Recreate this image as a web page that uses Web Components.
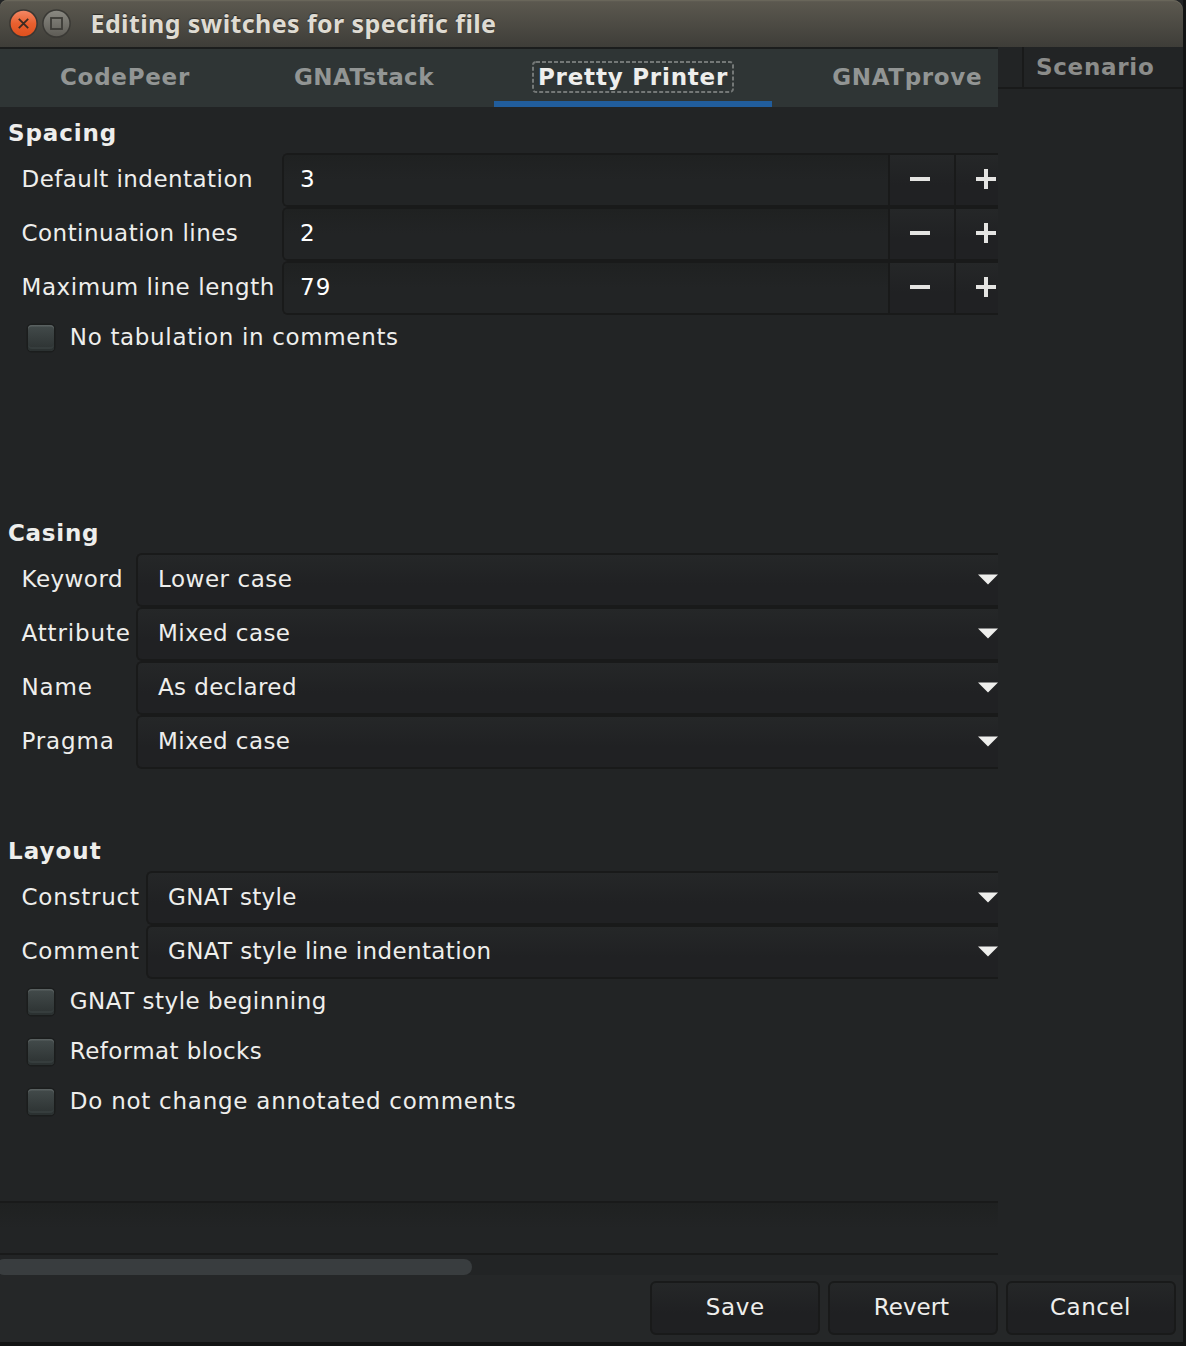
<!DOCTYPE html>
<html lang="en">
<head>
<meta charset="utf-8">
<title>Editing switches for specific file</title>
<style>
html,body{margin:0;background:#131414}
body{width:1186px;height:1346px;overflow:hidden;font:23px/28px "DejaVu Sans",sans-serif;color:#eeeeec}
</style>
</head>
<body>
<switch-dialog></switch-dialog>
<script>
const define = (name, css, html, setup) => customElements.define(name, class extends HTMLElement {
  connectedCallback() {
    if (this.shadowRoot) return;
    this.attachShadow({mode: 'open'}).innerHTML = `<style>*{box-sizing:border-box}${css}</style>${typeof html === 'function' ? html(this) : html}`;
    if (setup) setup(this);
  }
});

/* Text tracked so that its advance equals the w attribute. */
define('track-text', ':host{display:block;white-space:pre;flex:none}span{display:inline-block}', '<span><slot></slot></span>', el => {
  const w = +el.getAttribute('w');
  if (!w) return;
  const span = el.shadowRoot.querySelector('span');
  const n = el.textContent.length;
  span.style.letterSpacing = (w - span.getBoundingClientRect().width) / (n - 1) + 'px';
  el.style.width = w + 'px';
});

define('title-bar', `
:host{display:flex;align-items:center;height:47px;width:1183px;flex:none;border-radius:7px 10px 0 0;padding:0 0 0 9px;
background:linear-gradient(#66635a 0,#5b584f 2px,#3e3d38 100%);box-shadow:inset 0 1px #69665a}
svg{display:block;margin-right:4px}
track-text{font:bold 25px/32px "Noto Sans",sans-serif;color:#dfdbd2;text-shadow:0 -1px 1px #2d2c29;margin:0 0 1px 15.5px}`, `
<svg width="29" height="30" viewBox="0 0 29 30"><defs><linearGradient id="a" x2="0" y2="1"><stop stop-color="#f58a68"/><stop offset=".5" stop-color="#e9602f"/><stop offset="1" stop-color="#de4f1c"/></linearGradient></defs>
<circle cx="14.5" cy="14.5" r="13.6" fill="url(#a)" stroke="#3a3733" stroke-width="1.5"/><path d="M9.8 9.8l9.4 9.4m0-9.4l-9.4 9.4" stroke="#3c2a22" stroke-width="1.8"/></svg>
<svg width="29" height="30" viewBox="0 0 29 30"><defs><linearGradient id="b" x2="0" y2="1"><stop stop-color="#8b8a83"/><stop offset="1" stop-color="#5d5b55"/></linearGradient></defs>
<circle cx="14.5" cy="14.5" r="13.6" fill="url(#b)" stroke="#3a3935" stroke-width="1.5"/><rect x="9" y="9" width="11" height="11" fill="none" stroke="#3c3b37" stroke-width="1.8"/></svg>
<track-text w="405.5">Editing switches for specific file</track-text>`);

define('tab-item', `
:host{display:flex;flex:none;height:58px;justify-content:flex-start;font-weight:bold;color:#929594}
:host([active]){color:#eeeeec;box-shadow:inset 0 -6px #215d9c}
div{position:relative;margin-top:12px;height:32px;padding:2px 4px 0 4.7px}
svg{position:absolute;left:-1px;top:0}`, el => `
<div>${el.hasAttribute('active') ? '<svg width="202" height="32"><rect x="1" y="1" width="200" height="30" rx="3" fill="none" stroke="#747877" stroke-width="2" stroke-dasharray="4 2"/></svg>' : ''}<slot></slot></div>`);

define('tab-strip', ':host{display:flex;height:60px;flex:none;overflow:hidden;background:#2f3535;border-top:2px solid #1b1d1d}', '<slot></slot>');

define('option-group', `
:host{display:block;flex:none}
h2{margin:0;height:46px;padding:12px 0 0 8px;font-size:inherit;line-height:28px}`, el => `
<h2><track-text w="${el.getAttribute('w')}">${el.getAttribute('heading')}</track-text></h2><slot></slot>`);

define('field-row', `
:host{display:flex;height:54px;align-items:stretch}
.l{flex:none;width:var(--label);padding:12px 0 0 21.5px}
::slotted(*){flex:1}`, el => `
<div class="l"><track-text w="${el.getAttribute('w')}">${el.getAttribute('label')}</track-text></div><slot></slot>`);

define('spin-entry', `
:host{display:flex;border:2px solid #191a1a;border-right:0;border-radius:6px 0 0 6px;overflow:hidden}
.v{flex:1;padding:10px 0 0 16px;color:#fff;background:linear-gradient(#1f2121,#222425 50%)}
.b{flex:none;border-left:2px solid #191a1a;background:linear-gradient(#252728,#202123 60%)}
.m{width:66px;padding:14px 0 0 20px}.p{width:44px;padding:14px 0 0 20px}svg{display:block}`, `
<div class="v"><slot></slot></div>
<div class="b m"><svg width="20" height="20"><path d="M0 10h20" stroke="#e4e4e2" stroke-width="4"/></svg></div>
<div class="b p"><svg width="20" height="20"><path d="M0 10h20M10 0v20" stroke="#e4e4e2" stroke-width="4"/></svg></div>`);

define('combo-box', `
:host{display:flex;justify-content:space-between;border:2px solid #191a1a;border-right:0;border-radius:6px 0 0 6px;padding:10px 0 0 20px;background:linear-gradient(#252728,#202123 60%)}
svg{display:block;margin-top:9px}`, `
<slot></slot><svg width="20" height="11"><path d="M0 .5h20l-10 10z" fill="#eeeeec"/></svg>`);

define('check-option', `
:host{display:flex;height:50px;padding:8px 0 0 28px}
i{flex:none;width:26px;height:26px;margin:2px 15.8px 0 0;border-radius:4px;background:linear-gradient(#434b4b,#2f3535 85%);
box-shadow:0 0 0 1.5px #1b1d1d,inset 0 1.5px #596060,inset 0 -2px #2b3131,inset 0 -4px #363d3d}`, '<i></i><slot></slot>');

define('push-button', `
:host{display:flex;justify-content:center;width:170px;height:54px;border:2px solid #191a1a;border-radius:6px;padding-top:10px;background:linear-gradient(#252728,#1f2022 60%)}`, '<slot></slot>');

define('side-tab', `
:host{display:flex;height:42px;border-bottom:2px solid #191a1a;padding-left:24px;font-weight:bold;color:#8b8c8a}
div{border-left:2px solid #191a1a;padding:6px 0 0 12px;flex:1}`, '<div><slot></slot></div>');

define('switch-dialog', `
:host{display:flex;flex-direction:column;width:1183px;height:1342px;background:#222425}
.body{display:flex;height:1228px;flex:none}
.main{width:998px;display:flex;flex-direction:column;overflow:hidden}
.side{flex:1}
.t1{padding-left:55.3px;width:234.5px}.t2{padding-left:54.8px;width:259.5px}.t3{width:278px;padding-left:39.3px}.t4{padding-left:55.5px;width:300px}
.g1{height:400px;--label:282px}.g2{height:318px;--label:136px}.g3{height:376px;--label:146px}
.cmd{height:54px;flex:none;border:solid #191a1a;border-width:2px 0;background:linear-gradient(#1f2121,#222425 50%)}
.scroll{height:20px;padding-top:4px;flex:none}
.thumb{width:476px;height:16px;margin-left:-4px;border-radius:8px;background:#393d3f}
.actions{height:67px;display:flex;justify-content:flex-end;gap:8px;padding:6px 7px 0 0;background:#252728}`, `
<title-bar></title-bar>
<div class="body">
<div class="main">
<tab-strip>
<tab-item class="t1"><track-text w="129.3">CodePeer</track-text></tab-item>
<tab-item class="t2"><track-text w="139.5">GNATstack</track-text></tab-item>
<tab-item class="t3" active><track-text w="189.3">Pretty Printer</track-text></tab-item>
<tab-item class="t4"><track-text w="149.3">GNATprove</track-text></tab-item>
</tab-strip>
<option-group class="g1" heading="Spacing" w="108.3">
<field-row label="Default indentation" w="231"><spin-entry>3</spin-entry></field-row>
<field-row label="Continuation lines" w="216.3"><spin-entry>2</spin-entry></field-row>
<field-row label="Maximum line length" w="252.8"><spin-entry><track-text w="30.5">79</track-text></spin-entry></field-row>
<check-option><track-text w="328.3">No tabulation in comments</track-text></check-option>
</option-group>
<option-group class="g2" heading="Casing" w="90.5">
<field-row label="Keyword" w="101"><combo-box><track-text w="134">Lower case</track-text></combo-box></field-row>
<field-row label="Attribute" w="108.5"><combo-box><track-text w="132">Mixed case</track-text></combo-box></field-row>
<field-row label="Name" w="70.3"><combo-box><track-text w="138.5">As declared</track-text></combo-box></field-row>
<field-row label="Pragma" w="92.3"><combo-box><track-text w="132">Mixed case</track-text></combo-box></field-row>
</option-group>
<option-group class="g3" heading="Layout" w="92.7">
<field-row label="Construct" w="117.5"><combo-box><track-text w="128.3">GNAT style</track-text></combo-box></field-row>
<field-row label="Comment" w="117.5"><combo-box><track-text w="323">GNAT style line indentation</track-text></combo-box></field-row>
<check-option><track-text w="256.5">GNAT style beginning</track-text></check-option>
<check-option><track-text w="192">Reformat blocks</track-text></check-option>
<check-option><track-text w="446">Do not change annotated comments</track-text></check-option>
</option-group>
<div class="cmd"></div>
<div class="scroll"><div class="thumb"></div></div>
</div>
<div class="side"><side-tab><track-text w="117.7">Scenario</track-text></side-tab></div>
</div>
<div class="actions">
<push-button><track-text w="58.5">Save</track-text></push-button>
<push-button><track-text w="75.3" style="margin-right:3px">Revert</track-text></push-button>
<push-button><track-text w="80.5" style="margin-right:1.5px">Cancel</track-text></push-button>
</div>`);
</script>
</body>
</html>
